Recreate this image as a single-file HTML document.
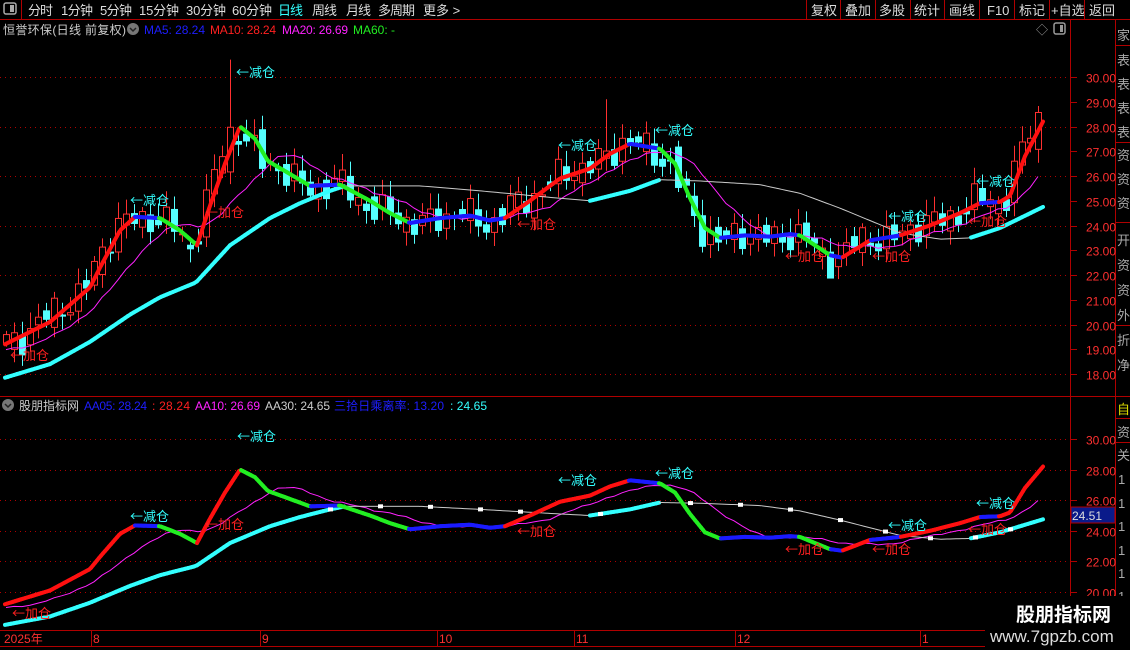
<!DOCTYPE html>
<html><head><meta charset="utf-8"><style>
html,body{margin:0;padding:0;background:#000;width:1130px;height:650px;overflow:hidden}
svg{display:block}
text{font-family:"Liberation Sans","Noto Sans CJK SC",sans-serif}
#ann text{font-family:"Noto Sans CJK SC","WenQuanYi Zen Hei",sans-serif}
</style></head><body>
<svg id="s" width="1130" height="650" viewBox="0 0 1130 650" xmlns="http://www.w3.org/2000/svg">
<rect width="1130" height="650" fill="#000"/>
<line x1="0" y1="19.5" x2="1130" y2="19.5" stroke="#b00000"/>
<line x1="21.5" y1="0" x2="21.5" y2="19" stroke="#b00000"/>
<rect x="4" y="3" width="12" height="11" rx="2" fill="none" stroke="#aaa" stroke-width="1.5"/><rect x="10" y="5" width="4" height="7" fill="#aaa"/>
<g font-size="13" fill="#ddd">
<text x="28" y="15" textLength="25">分时</text><text x="61" y="15" textLength="32">1分钟</text><text x="100" y="15" textLength="32">5分钟</text><text x="139" y="15" textLength="40">15分钟</text><text x="186" y="15" textLength="40">30分钟</text><text x="232" y="15" textLength="40">60分钟</text><text x="278" y="15" fill="#33ffff" textLength="25">日线</text><text x="312" y="15" textLength="25">周线</text><text x="346" y="15" textLength="25">月线</text><text x="378" y="15" textLength="37">多周期</text><text x="423" y="15">更多 &gt;</text>
</g>
<g stroke="#b00000"><line x1="806.5" y1="0" x2="806.5" y2="19"/><line x1="840.5" y1="0" x2="840.5" y2="19"/><line x1="875.5" y1="0" x2="875.5" y2="19"/><line x1="910.5" y1="0" x2="910.5" y2="19"/><line x1="944.5" y1="0" x2="944.5" y2="19"/><line x1="979.5" y1="0" x2="979.5" y2="19"/><line x1="1014.5" y1="0" x2="1014.5" y2="19"/><line x1="1049.5" y1="0" x2="1049.5" y2="19"/><line x1="1084.5" y1="0" x2="1084.5" y2="19"/></g>
<g font-size="13" fill="#ddd"><text x="811" y="15">复权</text><text x="845" y="15">叠加</text><text x="879" y="15">多股</text><text x="914" y="15">统计</text><text x="949" y="15">画线</text><text x="987" y="15">F10</text><text x="1019" y="15">标记</text><text x="1051" y="15">+自选</text><text x="1089" y="15">返回</text></g>
<g font-size="12"><text x="3" y="34" fill="#ccc" font-size="12" textLength="123">恒誉环保(日线 前复权)</text>
<circle cx="133" cy="29" r="6" fill="#777"/><path d="M130 28l3 3 3-3" stroke="#222" stroke-width="1.5" fill="none"/>
<text x="144" y="34" fill="#1e1eff" textLength="61">MA5: 28.24</text><text x="210" y="34" fill="#ff2020" textLength="66">MA10: 28.24</text><text x="282" y="34" fill="#ff22ff" textLength="66">MA20: 26.69</text><text x="353" y="34" fill="#22ee22">MA60: -</text></g>
<text x="1036" y="34" fill="#999" font-size="12">◇</text>
<rect x="1054" y="23" width="11" height="11" rx="2" fill="none" stroke="#999" stroke-width="1.5"/><rect x="1060" y="25" width="3" height="7" fill="#999"/>
<g stroke="#b00000"><line x1="1070.5" y1="20" x2="1070.5" y2="630"/><line x1="1115.5" y1="20" x2="1115.5" y2="650"/><line x1="0" y1="396.5" x2="1115" y2="396.5"/><line x1="0" y1="630.5" x2="1115" y2="630.5"/><line x1="0" y1="646.5" x2="1115" y2="646.5"/>
<line x1="1115" y1="45.5" x2="1130" y2="45.5"/><line x1="1115" y1="142.5" x2="1130" y2="142.5"/><line x1="1115" y1="222.5" x2="1130" y2="222.5"/><line x1="1115" y1="325.5" x2="1130" y2="325.5"/><line x1="1115" y1="396.5" x2="1130" y2="396.5"/><line x1="1115" y1="418.5" x2="1130" y2="418.5"/><line x1="1115" y1="442.5" x2="1130" y2="442.5"/></g>
<g font-size="13" fill="#aaa"><text x="1117" y="40">家</text><text x="1117" y="65">表</text><text x="1117" y="89">表</text><text x="1117" y="113">表</text><text x="1117" y="137">表</text><text x="1117" y="160">资</text><text x="1117" y="184">资</text><text x="1117" y="208">资</text><text x="1117" y="245">开</text><text x="1117" y="270">资</text><text x="1117" y="295">资</text><text x="1117" y="320">外</text><text x="1117" y="345">折</text><text x="1117" y="370">净</text><text x="1117" y="414" fill="#dd0">自</text><text x="1117" y="437">资</text><text x="1117" y="460">关</text>
<text x="1118" y="484">1</text><text x="1118" y="508">1</text><text x="1118" y="531">1</text><text x="1118" y="555">1</text><text x="1118" y="578">1</text><text x="1118" y="601">1</text></g>
<g font-size="12"><circle cx="8" cy="405" r="6" fill="#777"/><path d="M5 404l3 3 3-3" stroke="#222" stroke-width="1.5" fill="none"/>
<text x="19" y="410" fill="#ccc" font-size="12" textLength="60">股朋指标网</text><text x="84" y="410" fill="#1e1eff" textLength="63">AA05: 28.24</text><text x="152" y="410" fill="#ff2020" textLength="38">: 28.24</text><text x="195" y="410" fill="#ff22ff" textLength="65">AA10: 26.69</text><text x="265" y="410" fill="#ccc" textLength="65">AA30: 24.65</text><text x="334" y="410" fill="#1e1eff" textLength="110">三拾日乘离率: 13.20</text><text x="450" y="410" fill="#33ffff" textLength="37">: 24.65</text></g>
<g id="grid"></g>
<g id="plot"></g>
<g id="ann" font-size="13"></g>
<g stroke="#b00000"><line x1="91.5" y1="630" x2="91.5" y2="646"/><line x1="260.5" y1="630" x2="260.5" y2="646"/><line x1="437.5" y1="630" x2="437.5" y2="646"/><line x1="574.5" y1="630" x2="574.5" y2="646"/><line x1="735.5" y1="630" x2="735.5" y2="646"/><line x1="920.5" y1="630" x2="920.5" y2="646"/></g>
<g font-size="12" fill="#ff3030"><text x="4" y="643">2025年</text><text x="93" y="643">8</text><text x="262" y="643">9</text><text x="439" y="643">10</text><text x="576" y="643">11</text><text x="737" y="643">12</text><text x="922" y="643">1</text></g>
<rect x="1071" y="507" width="44" height="16" fill="#0a1a8a" stroke="#b00000"/>
<text x="1072" y="520" fill="#ddd" font-size="12">24.51</text>
<rect x="985" y="596" width="145" height="54" fill="#000"/>
<text x="1016" y="621" fill="#fff" font-size="19" font-weight="bold">股朋指标网</text>
<text x="990" y="642" fill="#ddd" font-size="17">www.7gpzb.com</text>
</svg>
<script>
(function(){
var yT=function(p){return 77+(30-p)*24.75}, yB=function(p){return 439+(30-p)*15.3};
function interp(k,x){if(x<=k[0][0])return k[0][1];for(var i=1;i<k.length;i++){if(x<=k[i][0]){var a=k[i-1],b=k[i];return a[1]+(b[1]-a[1])*(x-a[0])/(b[0]-a[0]);}}return k[k.length-1][1];}
var M5=[[5,19.2],[50,20.1],[90,21.5],[100,22.3],[120,23.8],[135,24.35],[160,24.3],[180,23.8],[197,23.2],[210,24.8],[225,26.5],[240,28.0],[255,27.5],[268,26.6],[285,26.2],[310,25.6],[340,25.65],[370,25.0],[390,24.5],[410,24.1],[440,24.3],[470,24.4],[490,24.2],[505,24.3],[530,25.0],[560,25.9],[590,26.3],[610,26.9],[630,27.3],[645,27.2],[660,27.1],[675,26.5],[690,25.1],[705,23.9],[720,23.5],[745,23.6],[770,23.55],[790,23.65],[800,23.6],[815,23.2],[830,22.8],[842,22.7],[870,23.4],[900,23.6],[930,24.0],[960,24.5],[980,24.9],[1000,24.95],[1010,25.2],[1025,26.8],[1043,28.2]];
var LL=[[5,17.85],[50,18.4],[90,19.3],[130,20.4],[160,21.1],[196,21.7],[230,23.2],[270,24.3],[300,24.9],[330,25.4],[345,25.6],[420,25.6],[480,25.4],[520,25.25],[560,25.1],[590,25.0],[630,25.4],[660,25.85],[700,25.8],[760,25.65],[800,25.3],[840,24.7],[870,24.2],[900,23.7],[940,23.45],[970,23.5],[1000,23.9],[1043,24.75]];
var g='',grid='';
[30,28,26,24,22,20,18].forEach(function(p){var y=Math.round(yT(p))+.5;grid+='<line x1="0" y1="'+y+'" x2="1068" y2="'+y+'" stroke="#b00000" stroke-dasharray="1 4"/>';});
for(var p=18;p<=30;p++){var y=Math.round(yT(p))+.5;grid+='<line x1="1070" y1="'+y+'" x2="1077" y2="'+y+'" stroke="#b00000"/><text x="1086" y="'+(y+5)+'" fill="#ff3030" font-size="12">'+p.toFixed(2)+'</text>';}
[30,28,26,24,22,20].forEach(function(p){var y=Math.round(yB(p))+.5;grid+='<line x1="0" y1="'+y+'" x2="1068" y2="'+y+'" stroke="#b00000" stroke-dasharray="1 4"/><line x1="1070" y1="'+y+'" x2="1077" y2="'+y+'" stroke="#b00000"/><text x="1086" y="'+(y+5)+'" fill="#ff3030" font-size="12">'+p.toFixed(2)+'</text>';});
var N=130,closes=[];
function nz(i){return 0.45*Math.sin(i*2.3)+0.3*Math.sin(i*5.1+1)+0.15*Math.sin(i*11.7);}
for(var i=0;i<N;i++){var x=6+8*i;var c=interp(M5,x+6)+nz(i);var o=interp(M5,x-4)+nz(i+37)*0.8;
 var hi=Math.max(o,c)+0.15+Math.abs(Math.sin(i*3.7))*0.5,lo=Math.min(o,c)-0.15-Math.abs(Math.sin(i*4.3))*0.4;
 if(Math.abs(x-230)<5)hi=30.7; if(Math.abs(x-606)<5)hi=29.1; if(Math.abs(x-830)<5)lo=21.9;
 closes.push(c);
 var up=c>=o,col=up?'#ff3030':'#55ffff';
 var yt=yT(Math.max(o,c)),yb=yT(Math.min(o,c));if(yb-yt<1)yb=yt+1;
 g+='<line x1="'+(x+.5)+'" y1="'+yT(hi)+'" x2="'+(x+.5)+'" y2="'+yT(lo)+'" stroke="'+col+'"/>';
 g+='<rect x="'+(x-2.5)+'" y="'+yt+'" width="6" height="'+(yb-yt)+'" fill="'+(up?'#000':col)+'" stroke="'+col+'"/>';}
function ma10pts(fy){var s='';for(var i=0;i<N;i++){var a=0,n=0;for(var j=i-9;j<=i;j++){a+=(j>=0?closes[j]:interp(M5,6)-0.3);n++;}s+=(6+8*i)+','+fy(a/n).toFixed(1)+' ';}return s;}
function drawSet(fy){
 g+='<polyline points="'+ma10pts(fy)+'" fill="none" stroke="#ff22ff" stroke-width="1"/>';
 for(var x=5;x<1043;x+=3){var x2=Math.min(x+3,1043),a=interp(LL,x),b=interp(LL,x2),sl=(b-a)/(x2-x);
  if(sl>0.008)g+='<line x1="'+x+'" y1="'+fy(a)+'" x2="'+x2+'" y2="'+fy(b)+'" stroke="#33ffff" stroke-width="4" stroke-linecap="round"/>';
  else g+='<line x1="'+x+'" y1="'+fy(a)+'" x2="'+x2+'" y2="'+fy(b)+'" stroke="#cccccc" stroke-width="1"/>';}
 for(var x=5;x<1043;x+=2){var x2=Math.min(x+2,1043),a=interp(M5,x),b=interp(M5,x2),sl=(b-a)/(x2-x);
  var col=sl>0.01?'#ff1010':(sl<-0.01?'#22ee22':'#1a1aff');
  g+='<line x1="'+x+'" y1="'+fy(a)+'" x2="'+x2+'" y2="'+fy(b)+'" stroke="'+col+'" stroke-width="4" stroke-linecap="round"/>';}
}
drawSet(yT);drawSet(yB);
[330,380,430,480,520,600,690,740,790,840,885,930,975,1010].forEach(function(x){g+='<rect x="'+(x-2)+'" y="'+(yB(interp(LL,x))-2)+'" width="5" height="4" fill="#fff"/>';});
document.getElementById('grid').innerHTML=grid;
document.getElementById('plot').innerHTML=g;
var A=[["r",10,360],["c",130,205],["r",205,217],["c",236,77],["c",558,150],["c",655,135],["r",517,229],["r",785,261],["r",872,261],["c",888,221],["c",976,186],["r",968,226],
["c",237,441],["c",130,521],["r",205,529],["c",558,485],["c",655,478],["r",517,536],["r",785,554],["r",872,554],["c",888,530],["c",976,508],["r",968,534],["r",12,618]];
var t='';A.forEach(function(a){t+='<text x="'+a[1]+'" y="'+a[2]+'" fill="'+(a[0]=="r"?"#ff2020":"#33ffff")+'">'+(a[0]=="r"?"←加仓":"←减仓")+'</text>';});
document.getElementById('ann').innerHTML=t;
})();
</script>
</body></html>
